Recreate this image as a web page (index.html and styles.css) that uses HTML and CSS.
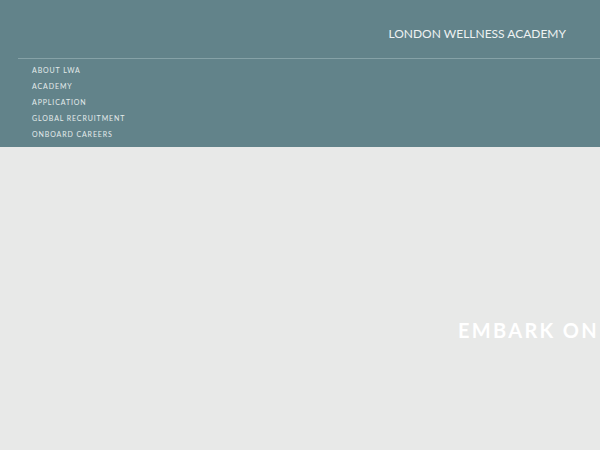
FILE: index.html
```html
<!DOCTYPE html>
<html>
<head>
<meta charset="utf-8">
<link rel="stylesheet" href="styles.css">
</head>
<body>
<header class="header">
  <div class="brand-row">
    <div class="brand">LONDON WELLNESS ACADEMY</div>
  </div>
  <nav class="nav">
    <a class="nav-item">ABOUT LWA</a>
    <a class="nav-item">ACADEMY</a>
    <a class="nav-item">APPLICATION</a>
    <a class="nav-item">GLOBAL RECRUITMENT</a>
    <a class="nav-item">ONBOARD CAREERS</a>
  </nav>
</header>
<section class="hero">
  <h1 class="hero-title">EMBARK ON</h1>
</section>
</body>
</html>
```
FILE: styles.css
```css
html, body {
  margin: 0;
  padding: 0;
  width: 600px;
  height: 450px;
  overflow: hidden;
  background: #e8e9e8;
  font-family: "Lato", "Open Sans", sans-serif;
}
.header {
  background: #62838a;
  height: 147px;
  box-sizing: border-box;
}
.brand-row {
  display: flex;
  justify-content: flex-end;
  padding: 26px 34px 0 0;
  height: 58px;
  box-sizing: border-box;
}
.brand {
  color: #eef2f2;
  font-size: 12px;
  letter-spacing: 0;
  line-height: 16px;
}
.nav {
  margin-left: 18px;
  border-top: 1px solid #86a2a7;
  padding: 3px 0 0 14px;
  display: flex;
  flex-direction: column;
}
.nav-item {
  color: #e4ecec;
  font-size: 7px;
  letter-spacing: 0.9px;
  line-height: 16px;
  height: 16px;
}
.hero {
  height: 303px;
  overflow: hidden;
  padding: 170px 0 0 458px;
  box-sizing: border-box;
}
.hero-title {
  margin: 0;
  color: #ffffff;
  font-weight: 700;
  font-size: 20px;
  letter-spacing: 2.3px;
  line-height: 26px;
  white-space: nowrap;
}
```
